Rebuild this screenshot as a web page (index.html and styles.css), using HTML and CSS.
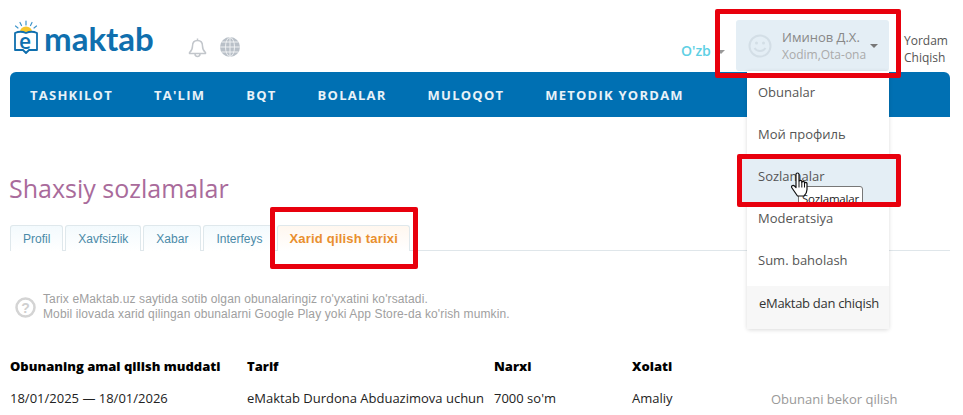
FILE: index.html
```html
<!DOCTYPE html>
<html lang="uz">
<head>
    <meta charset="UTF-8">
    <title>Shaxsiy sozlamalar</title>
    <link rel="stylesheet" href="styles.css">
</head>
<body>
    <div class="page">
        <div class="top">
            <a class="logo">
                <svg class="logo-book" width="24" height="34" viewBox="0 0 24 34">
                    <path d="M6 12a6 5.500 0 0 1 12 0z" fill="#f7c72c"/>
                    <g stroke="#3f95c9" stroke-width="1.200" stroke-linecap="round">
                        <path d="M1.500 6l2.500 2M6 2.500l1.500 3M12 1v4M18 2.500l-1.500 3M22.500 6l-2.500 2"/>
                    </g>
                    <path d="M1 13q5.500-2.500 11 0q5.500-2.500 11 0v17h-8l-3 3-3-3H1z" fill="#fff" stroke="#0f6fae" stroke-width="1.800" stroke-linejoin="round"/>
                </svg>
                <span class="logo-e">e</span>
                <span class="logo-text">maktab</span>
            </a>
            <svg class="top-icon" width="19" height="21" viewBox="0 0 19 21">
                <path d="M9.500 1.500v2M9.500 3.500c-3.500 0-5 2.500-5 5.500 0 3.500-1 5-3 6.500v1h16v-1c-2-1.500-3-3-3-6.500 0-3-1.500-5.500-5-5.500zM7 17c0 3.200 5 3.200 5 0" fill="none" stroke="#c2c6cb" stroke-width="1.500" stroke-linejoin="round"/>
            </svg>
            <svg class="top-icon globe" width="20" height="20" viewBox="0 0 20 20">
                <circle cx="10" cy="10" r="10" fill="#b9c0c8"/>
                <g fill="none" stroke="#eef0f2" stroke-width="1">
                    <ellipse cx="10" cy="10" rx="4.500" ry="9.500"/>
                    <path d="M10 0v20M0 10h20M1.500 5h17M1.500 15h17"/>
                </g>
            </svg>
            <div class="lang">O'zb <span class="caret caret-light"></span></div>
            <div class="user">
                <svg class="smile" width="24" height="24" viewBox="0 0 24 24">
                    <g fill="none" stroke="#d3dee6" stroke-width="2">
                        <circle cx="12" cy="12" r="10.500"/>
                        <path d="M6.500 14c2.500 4 8.500 4 11 0"/>
                    </g>
                    <circle cx="8.500" cy="9" r="1.500" fill="#d3dee6"/>
                    <circle cx="15.500" cy="9" r="1.500" fill="#d3dee6"/>
                </svg>
                <div class="user-info">
                    <div class="user-name">Иминов Д.Х.</div>
                    <div class="user-role">Xodim,Ota-ona</div>
                </div>
                <span class="caret"></span>
            </div>
            <div class="top-links">
                <a>Yordam</a>
                <a>Chiqish</a>
            </div>
        </div>

        <ul class="nav">
            <li>TASHKILOT</li>
            <li>TA'LIM</li>
            <li>BQT</li>
            <li>BOLALAR</li>
            <li>MULOQOT</li>
            <li>METODIK YORDAM</li>
        </ul>

        <h1 class="title">Shaxsiy sozlamalar</h1>

        <ul class="tabs">
            <li>Profil</li>
            <li>Xavfsizlik</li>
            <li>Xabar</li>
            <li>Interfeys</li>
            <li class="active">Xarid qilish tarixi</li>
        </ul>

        <div class="help">
            <svg class="help-icon" width="21" height="21" viewBox="0 0 21 21">
                <circle cx="10.500" cy="10.500" r="9" fill="#fff" stroke="#d4d4d4" stroke-width="2.500"/>
                <text x="10.500" y="15.500" class="help-mark">?</text>
            </svg>
            <p>Tarix eMaktab.uz saytida sotib olgan obunalaringiz ro'yxatini ko'rsatadi.<br>Mobil ilovada xarid qilingan obunalarni Google Play yoki App Store-da ko'rish mumkin.</p>
        </div>

        <table class="orders">
            <tr>
                <th class="col-date">Obunaning amal qilish muddati</th>
                <th class="col-plan">Tarif</th>
                <th class="col-price">Narxi</th>
                <th class="col-state">Xolati</th>
                <th></th>
            </tr>
            <tr>
                <td>18/01/2025 — 18/01/2026</td>
                <td>eMaktab Durdona Abduazimova uchun</td>
                <td>7000 so'm</td>
                <td>Amaliy</td>
                <td class="cancel">Obunani bekor qilish</td>
            </tr>
        </table>
    </div>

    <ul class="menu">
        <li>Obunalar</li>
        <li>Мой профиль</li>
        <li class="hover">Sozlamalar</li>
        <li>Moderatsiya</li>
        <li>Sum. baholash</li>
        <li class="logout">eMaktab dan chiqish</li>
    </ul>

    <div class="tooltip">Sozlamalar</div>
    <svg class="hand" width="20" height="26" viewBox="0 0 20 26">
        <path d="M6 2.500c0-2 3-2 3 0v7c0-1.500 2.800-1.500 2.800 0v1c0-1.500 2.700-1.500 2.700 0v1c0-1.400 2.500-1.400 2.500 0v6c0 3-1.500 5-3 6.500H7.500L2 16c-1.500-2 1-3.500 2.500-2L6 15.500z" fill="#fff" stroke="#111" stroke-width="1.200" stroke-linejoin="round"/>
        <path d="M9 10v5.500M11.800 10.500v5M14.500 11.500v4" stroke="#111" stroke-width="1" fill="none"/>
    </svg>

    <div class="mark mark-user"></div>
    <div class="mark mark-item"></div>
    <div class="mark mark-tab"></div>
</body>
</html>
```

FILE: styles.css
```css
*{
    margin: 0;
    padding: 0;
    box-sizing: border-box;
}
body{
    width: 963px;
    height: 415px;
    overflow: hidden;
    position: relative;
    background-color: #ffffff;
    font-family: "Open Sans", "Noto Sans", sans-serif;
    font-size: 13px;
    color: #333;
}
ul{
    list-style-type: none;
}
.page{
    padding: 0 13px 0 10px;
}

/* top row */
.top{
    height: 72px;
    display: flex;
    align-items: flex-start;
}
.logo{
    width: 178px;
    padding: 20px 0 0 4px;
    display: flex;
    position: relative;
    color: #0f6fae;
}
.logo-e{
    position: absolute;
    left: 9px;
    top: 29px;
    font-size: 21px;
    line-height: 24px;
    font-weight: 600;
}
.logo-text{
    margin: -2px 0 0 6px;
    font-family: "Lato", sans-serif;
    font-size: 33px;
    line-height: 40px;
    font-weight: 700;
}
.top-icon{
    margin-top: 37px;
}
.globe{
    margin-left: 13px;
}
.lang{
    margin: 42px 0 0 441px;
    width: 55px;
    font-weight: 600;
    font-size: 14px;
    line-height: 18px;
    color: #5fd0e4;
}
.caret{
    display: inline-block;
    width: 0;
    height: 0;
    border-left: 4px solid transparent;
    border-right: 4px solid transparent;
    border-top: 4px solid #777;
}
.caret-light{
    margin-left: 3px;
    vertical-align: middle;
    border-top-color: #999;
}
.user{
    width: 153px;
    height: 51px;
    margin-top: 20px;
    padding: 0 11px 0 12px;
    display: flex;
    align-items: center;
    background-color: #e4eef5;
    border-radius: 3px;
}
.user-info{
    margin-left: 10px;
    flex: 1;
}
.user-name{
    font-size: 13px;
    line-height: 18px;
    color: #888;
}
.user-role{
    font-size: 12px;
    line-height: 18px;
    color: #aaa;
}
.top-links{
    margin: 32px 0 0 15px;
    font-size: 12px;
    line-height: 17px;
    color: #555;
}
.top-links a{
    display: block;
}

/* nav bar */
.nav{
    width: 940px;
    height: 45px;
    padding-left: 20px;
    display: flex;
    gap: 41px;
    align-items: center;
    background-color: #0070b3;
    border-radius: 6px 6px 0 0;
    color: #e8f2f8;
    font-size: 13px;
    font-weight: 700;
    letter-spacing: 1.24px;
}

.title{
    margin: 55px 0 0 -1px;
    font-size: 25px;
    line-height: 32px;
    font-weight: 400;
    color: #a96b9b;
}

/* tabs */
.tabs{
    width: 940px;
    height: 26px;
    margin-top: 21px;
    display: flex;
    gap: 2px;
    border-bottom: 1px solid #dfe6ea;
    font-family: "Liberation Sans", Arial, sans-serif;
    font-size: 12px;
}
.tabs li{
    height: 26px;
    padding: 0 12px;
    line-height: 26px;
    color: #4a8aa8;
    background: linear-gradient(#f3fafd, #ffffff);
    border: 1px solid #dfe8ec;
    border-bottom: none;
    border-radius: 3px 3px 0 0;
}
.tabs .active{
    padding: 0 11px;
    color: #e98f2e;
    font-size: 13px;
    font-weight: 700;
    letter-spacing: 0.2px;
    background: linear-gradient(#fff7ef, #ffffff);
}

/* help text */
.help{
    margin-top: 41px;
    padding-left: 5px;
    display: flex;
    font-family: "Liberation Sans", Arial, sans-serif;
    font-size: 12px;
    line-height: 15px;
    letter-spacing: 0.12px;
    color: #a0a0a0;
}
.help-icon{
    margin: 5px 7px 0 0;
}
.help-mark{
    font-size: 14px;
    font-weight: 700;
    fill: #d0d0d0;
    text-anchor: middle;
}

/* table */
.orders{
    width: 940px;
    margin-top: 28px;
    table-layout: fixed;
    border-collapse: collapse;
    color: #222;
}
.orders th{
    height: 32px;
    text-align: left;
    color: #000;
    font-size: 13px;
    font-weight: 800;
}
.orders td{
    height: 33px;
    font-size: 13px;
    border-bottom: 1px solid #cfe0ea;
    white-space: nowrap;
}
.col-date{
    width: 237px;
}
.col-plan{
    width: 247px;
}
.col-price{
    width: 138px;
}
.col-state{
    width: 119px;
}
.orders .cancel{
    padding-left: 20px;
    color: #999;
    border-bottom: none;
}

/* user dropdown, opened over the page */
.menu{
    position: absolute;
    left: 747px;
    top: 71px;
    width: 142px;
    background-color: #fff;
    box-shadow: 0 1px 4px rgba(0, 0, 0, 0.15);
    border-radius: 0 0 3px 3px;
}
.menu li{
    height: 42px;
    padding-left: 11px;
    line-height: 42px;
    color: #555;
}
.menu .hover{
    margin: 0 -7px;
    padding-left: 18px;
    background-color: #e4eef5;
    box-shadow: 0 6px 0 #e4eef5;
}
.menu .logout{
    height: 43px;
    margin-top: 5px;
    line-height: 34px;
    padding-left: 12px;
    color: #333;
    letter-spacing: -0.3px;
    background-color: #f7f7f7;
}
.tooltip{
    position: absolute;
    left: 798px;
    top: 186px;
    height: 21px;
    padding: 0 3px;
    font-size: 11.5px;
    line-height: 23px;
    letter-spacing: -0.2px;
    color: #222;
    background-color: #fff;
    border: 1px solid #777;
    border-radius: 3px;
}
.hand{
    position: absolute;
    left: 790px;
    top: 172px;
}

/* red marks drawn over the screenshot */
.mark{
    position: absolute;
    border: 5px solid #e8000d;
    border-radius: 2px;
}
.mark-user{
    left: 715px;
    top: 9px;
    width: 186px;
    height: 69px;
}
.mark-item{
    left: 737px;
    top: 154px;
    width: 164px;
    height: 53px;
}
.mark-tab{
    left: 270px;
    top: 207px;
    width: 148px;
    height: 62px;
}
```
